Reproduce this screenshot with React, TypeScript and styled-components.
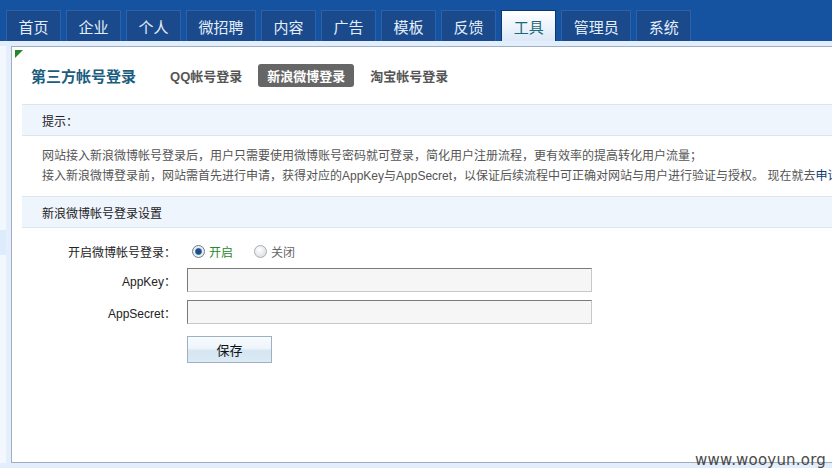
import React from "react";
import styled, { createGlobalStyle } from "styled-components";

const Global = createGlobalStyle`
  html, body { margin: 0; padding: 0; }
  body {
    width: 832px; height: 468px; overflow: hidden;
    background: #e2eefb;
    font-family: "Liberation Sans", "Noto Sans CJK SC", sans-serif;
    font-size: 12px; color: #333;
  }
`;

const Page = styled.div`
  position: relative;
  width: 832px;
  height: 468px;
  overflow: hidden;
  display: flex;
  flex-direction: column;
`;

const NavBar = styled.div`
  height: 41px;
  background: #1552a0;
  display: flex;
  align-items: flex-end;
  padding-left: 6px;
  gap: 5px;
  flex-shrink: 0;
`;

const NavTab = styled.div<{ $active?: boolean }>`
  height: 31px;
  box-sizing: border-box;
  padding: 0 11.5px;
  display: flex;
  align-items: center;
  font-family: "Noto Sans CJK SC", sans-serif;
  font-size: 15px;
  border: 1px solid ${(p) => (p.$active ? "#0c3670" : "#2c62aa")};
  border-bottom: none;
  background: ${(p) =>
    p.$active ? "linear-gradient(#ffffff, #dbe8f8)" : "#1a4a8c"};
  color: ${(p) => (p.$active ? "#1d6878" : "#e4eef9")};
`;

const Body = styled.div`
  flex: 1;
  display: flex;
  padding-top: 5px;
  padding-bottom: 5px;
  background: #e2eefb;
`;

const SideStrip = styled.div`
  width: 6px;
  flex-shrink: 0;
  background: #f2f8fe;
  display: flex;
  flex-direction: column;
  padding-top: 184px;
`;

const SideMark = styled.div`
  height: 25px;
  background: #dcecfc;
`;

const Gutter = styled.div`
  width: 5px;
  flex-shrink: 0;
  background: #e4effb;
`;

const Panel = styled.div`
  position: relative;
  flex: 1;
  min-width: 900px;
  background: #fff;
  border: 1px solid #a0aec2;
  border-right: none;
`;

const Corner = styled.div`
  position: absolute;
  left: 3px;
  top: 3px;
  width: 0;
  height: 0;
  border-top: 8px solid #24882a;
  border-right: 8px solid transparent;
`;

const Header = styled.div`
  display: flex;
  align-items: center;
  height: 23px;
  padding: 17px 0 17px 19px;
  font-family: "Liberation Sans", "Noto Sans CJK SC", sans-serif;
`;

const Title = styled.div`
  font-size: 15px;
  font-weight: bold;
  color: #1a5d80;
  margin-right: 25px;
`;

const SubTab = styled.div<{ $active?: boolean }>`
  height: 23px;
  display: flex;
  align-items: center;
  padding: 0 9px;
  margin-right: 7px;
  border-radius: 3px;
  font-size: 13px;
  font-weight: bold;
  background: ${(p) => (p.$active ? "#666" : "transparent")};
  color: ${(p) => (p.$active ? "#fff" : "#555")};
`;

const Content = styled.div`
  margin-left: 10px;
`;

const SectionHead = styled.div`
  height: 30px;
  display: flex;
  align-items: center;
  padding-left: 20px;
  background: #eff5fd;
  border-top: 1px solid #dbe6f1;
  border-bottom: 1px solid #dbe6f1;
  font-family: "Noto Sans CJK SC", sans-serif;
  font-size: 12px;
  color: #222;
`;

const Desc = styled.div`
  padding: 10px 0 10px 20px;
  font-family: "Liberation Sans", "Noto Sans CJK SC", sans-serif;
  font-size: 12px;
  line-height: 20px;
  color: #555;
  white-space: nowrap;
`;

const Link = styled.span`
  color: #0b3a6e;
`;

const Form = styled.div`
  display: grid;
  grid-template-columns: 154px 1fr;
  column-gap: 11px;
  padding-top: 13px;
  font-family: "Liberation Sans", "Noto Sans CJK SC", sans-serif;
  font-size: 12px;
  color: #222;
`;

const Label = styled.div<{ $h: number; $mb: number }>`
  height: ${(p) => p.$h}px;
  margin-bottom: ${(p) => p.$mb}px;
  display: flex;
  align-items: center;
  justify-content: flex-end;
`;

const Field = styled.div<{ $h: number; $mb: number }>`
  height: ${(p) => p.$h}px;
  margin-bottom: ${(p) => p.$mb}px;
  display: flex;
  align-items: center;
`;

const RadioOpt = styled.label<{ $on?: boolean }>`
  display: flex;
  align-items: center;
  gap: 4px;
  margin-right: 16px;
  margin-left: 5px;
  color: ${(p) => (p.$on ? "#2a8a2a" : "#666")};
`;

const RadioDot = styled.span<{ $on?: boolean }>`
  width: 11px;
  height: 11px;
  border-radius: 50%;
  border: 1px solid ${(p) => (p.$on ? "#6d7c8c" : "#a8aeb4")};
  background: ${(p) =>
    p.$on
      ? "radial-gradient(circle, #1d4f86 0 2.6px, #5e8fc0 3.2px, #e9eef3 3.9px)"
      : "radial-gradient(circle at 40% 35%, #ffffff, #d3d7db)"};
`;

const Input = styled.input`
  width: 405px;
  height: 24px;
  box-sizing: border-box;
  border: 1px solid #c8c8c8;
  border-top-color: #7a7a7a;
  border-left-color: #7a7a7a;
  background: #f6f6f6;
  padding: 0 4px;
  outline: none;
`;

const SaveButton = styled.button`
  width: 85px;
  height: 27px;
  border: 1px solid #9fb0c2;
  background: linear-gradient(#f7fbfe 0%, #eef5fb 45%, #d4e6f2 55%, #dcebf5 100%);
  font-family: "Noto Sans CJK SC", sans-serif;
  font-size: 13px;
  color: #111;
  padding: 0;
`;

const Watermark = styled.div`
  position: absolute;
  right: 6px;
  bottom: -1px;
  font-family: "DejaVu Sans", sans-serif;
  font-size: 15px;
  color: #4a4a4a;
  letter-spacing: 0.2px;
`;

const navItems = ["首页", "企业", "个人", "微招聘", "内容", "广告", "模板", "反馈", "工具", "管理员", "系统"];

export default function App() {
  return (
    <Page>
      <Global />
      <NavBar>
        {navItems.map((n) => (
          <NavTab key={n} $active={n === "工具"}>
            {n}
          </NavTab>
        ))}
      </NavBar>
      <Body>
        <SideStrip>
          <SideMark />
        </SideStrip>
        <Gutter />
        <Panel>
          <Corner />
          <Header>
            <Title>第三方帐号登录</Title>
            <SubTab>QQ帐号登录</SubTab>
            <SubTab $active>新浪微博登录</SubTab>
            <SubTab>淘宝帐号登录</SubTab>
          </Header>
          <Content>
            <SectionHead>提示：</SectionHead>
            <Desc>
              网站接入新浪微博帐号登录后，用户只需要使用微博账号密码就可登录，简化用户注册流程，更有效率的提高转化用户流量；
              <br />
              接入新浪微博登录前，网站需首先进行申请，获得对应的AppKey与AppSecret，以保证后续流程中可正确对网站与用户进行验证与授权。 现在就去
              <Link>申请</Link>
            </Desc>
            <SectionHead>新浪微博帐号登录设置</SectionHead>
            <Form>
              <Label $h={20} $mb={7}>开启微博帐号登录：</Label>
              <Field $h={20} $mb={7}>
                <RadioOpt $on>
                  <RadioDot $on />
                  开启
                </RadioOpt>
                <RadioOpt>
                  <RadioDot />
                  关闭
                </RadioOpt>
              </Field>
              <Label $h={24} $mb={8}>AppKey：</Label>
              <Field $h={24} $mb={8}>
                <Input />
              </Field>
              <Label $h={24} $mb={12}>AppSecret：</Label>
              <Field $h={24} $mb={12}>
                <Input />
              </Field>
              <Label $h={27} $mb={0} />
              <Field $h={27} $mb={0}>
                <SaveButton>保存</SaveButton>
              </Field>
            </Form>
          </Content>
        </Panel>
      </Body>
      <Watermark>www.wooyun.org</Watermark>
    </Page>
  );
}
